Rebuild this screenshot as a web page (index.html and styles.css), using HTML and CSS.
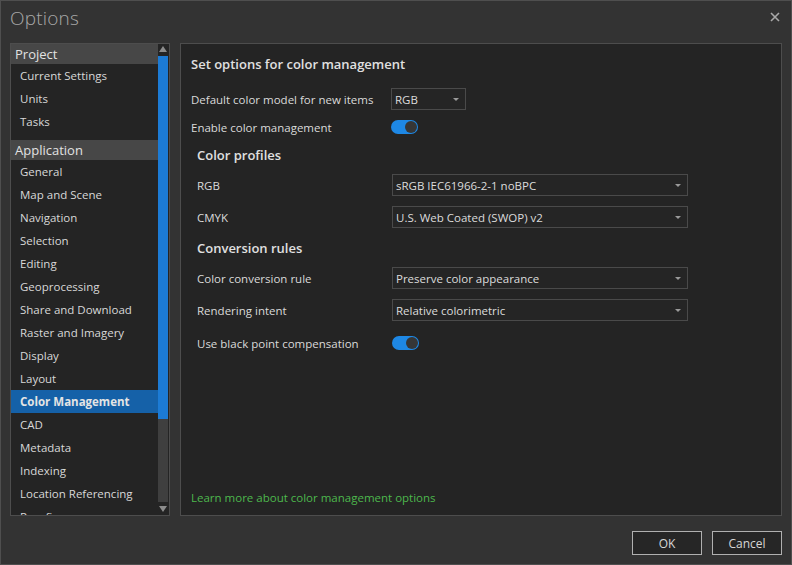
FILE: index.html
```html
<!DOCTYPE html>
<html>
<head>
<meta charset="utf-8">
<link rel="stylesheet" href="styles.css">
</head>
<body>
<div class="window">
  <div class="titlebar">
    <span class="title">Options</span>
    <span class="close">
      <svg width="10" height="10" viewBox="0 0 10 10"><path d="M1 1 L9 9 M9 1 L1 9" stroke="#a9a9a9" stroke-width="1.6"/></svg>
    </span>
  </div>
  <div class="body">
    <div class="sidebar">
      <div class="list">
        <div class="group">Project</div>
        <div class="item">Current Settings</div>
        <div class="item">Units</div>
        <div class="item">Tasks</div>
        <div class="group group-gap">Application</div>
        <div class="item">General</div>
        <div class="item">Map and Scene</div>
        <div class="item">Navigation</div>
        <div class="item">Selection</div>
        <div class="item">Editing</div>
        <div class="item">Geoprocessing</div>
        <div class="item">Share and Download</div>
        <div class="item">Raster and Imagery</div>
        <div class="item">Display</div>
        <div class="item">Layout</div>
        <div class="item selected">Color Management</div>
        <div class="item">CAD</div>
        <div class="item">Metadata</div>
        <div class="item">Indexing</div>
        <div class="item">Location Referencing</div>
        <div class="item">Proofing</div>
      </div>
      <div class="scrollbar">
        <div class="arrow up"></div>
        <div class="track">
          <div class="thumb"></div>
        </div>
        <div class="arrow down"></div>
      </div>
    </div>
    <div class="main">
      <div class="heading">Set options for color management</div>
      <div class="row row-first">
        <span class="label">Default color model for new items</span>
        <div class="select small"><span>RGB</span><i class="caret"></i></div>
      </div>
      <div class="row row-toggle">
        <span class="label">Enable color management</span>
        <div class="toggle"><i class="knob"></i></div>
      </div>
      <div class="subhead sub-first">Color profiles</div>
      <div class="row indent r-a">
        <span class="label">RGB</span>
        <div class="select wide"><span>sRGB IEC61966-2-1 noBPC</span><i class="caret"></i></div>
      </div>
      <div class="row indent r-b">
        <span class="label">CMYK</span>
        <div class="select wide"><span>U.S. Web Coated (SWOP) v2</span><i class="caret"></i></div>
      </div>
      <div class="subhead sub-second">Conversion rules</div>
      <div class="row indent r-a">
        <span class="label">Color conversion rule</span>
        <div class="select wide"><span>Preserve color appearance</span><i class="caret"></i></div>
      </div>
      <div class="row indent r-b">
        <span class="label">Rendering intent</span>
        <div class="select wide"><span>Relative colorimetric</span><i class="caret"></i></div>
      </div>
      <div class="row indent row-toggle2">
        <span class="label">Use black point compensation</span>
        <div class="toggle"><i class="knob"></i></div>
      </div>
      <div class="link">Learn more about color management options</div>
    </div>
  </div>
  <div class="footer">
    <button class="btn">OK</button>
    <button class="btn">Cancel</button>
  </div>
</div>
</body>
</html>
```
FILE: styles.css
```css
* { box-sizing: border-box; }
html, body { margin: 0; padding: 0; background: #333333; }
body { font-family: "Open Sans", "Noto Sans", sans-serif; font-size: 11.5px; color: #dadada; }

.window {
  width: 792px;
  height: 565px;
  border: 1px solid #4f4f4f;
  background: #333333;
  display: flex;
  flex-direction: column;
}

.titlebar {
  height: 42px;
  display: flex;
  align-items: center;
  justify-content: space-between;
  padding: 0 11px 0 9px;
}
.title {
  font-size: 19px;
  font-weight: 300;
  color: #a8a8a8;
  letter-spacing: 0.2px;
  margin-top: -8px;
}
.close { display: flex; margin-top: -10px; }

.body {
  display: flex;
  gap: 10px;
  padding: 0 9px;
  height: 473px;
}

.sidebar {
  width: 160px;
  border: 1px solid #4d4d4d;
  background: #242424;
  display: flex;
  overflow: hidden;
}
.list {
  flex: 1;
  overflow: hidden;
}
.group {
  height: 20px;
  line-height: 20px;
  background: #474747;
  color: #e2e2e2;
  font-size: 13px;
  padding-left: 4px;
}
.group-gap { margin-top: 7px; }
.item {
  height: 23px;
  line-height: 23px;
  padding-left: 9px;
  white-space: nowrap;
  color: #d8d8d8;
}
.item.selected {
  background: #1561a8;
  font-weight: 700;
  color: #e4e4e4;
}

.scrollbar {
  width: 10px;
  margin-right: 1px;
  display: flex;
  flex-direction: column;
  align-items: center;
  background: #242424;
}
.arrow {
  width: 0; height: 0;
  border-left: 4px solid transparent;
  border-right: 4px solid transparent;
}
.arrow.up { border-bottom: 6px solid #8c8c8c; margin: 2px 0 4px; }
.arrow.down { border-top: 6px solid #8c8c8c; margin: 4px 0 3px; }
.track {
  flex: 1;
  width: 10px;
  background: #3f3f3f;
}
.thumb {
  height: 363px;
  background: #1c7bd5;
}

.main {
  flex: 1;
  border: 1px solid #4d4d4d;
  background: #242424;
  display: flex;
  flex-direction: column;
  padding: 11px 0 9px 10px;
}
.heading {
  height: 18px;
  line-height: 18px;
  font-size: 13px;
  font-weight: 600;
  color: #e0e0e0;
}
.row {
  height: 22px;
  display: flex;
  align-items: center;
}
.row .label { width: 200px; flex: none; }
.row.indent { padding-left: 6px; }
.row.indent .label { width: 195px; }
.row-first { margin-top: 15px; }
.row-toggle { margin-top: 6px; }
.subhead {
  height: 18px;
  line-height: 18px;
  font-size: 13px;
  font-weight: 600;
  padding-left: 6px;
  color: #e0e0e0;
}
.sub-first { margin-top: 8px; }
.sub-second { margin-top: 11px; }
.r-a { margin-top: 10px; }
.r-b { margin-top: 10px; }
.row-toggle2 { margin-top: 11px; }

.select {
  height: 22px;
  border: 1px solid #4a4a4a;
  background: #252525;
  display: flex;
  align-items: center;
  justify-content: space-between;
  padding: 0 6px 0 3px;
  color: #dcdcdc;
}
.select.small { width: 75px; }
.select.wide { width: 296px; }
.caret {
  width: 0; height: 0;
  border-left: 3px solid transparent;
  border-right: 3px solid transparent;
  border-top: 3px solid #9a9a9a;
}

.toggle {
  width: 27px;
  height: 14px;
  border-radius: 7px;
  background: #1e88e5;
  display: flex;
  align-items: center;
  justify-content: flex-end;
  padding-right: 1px;
}
.knob {
  width: 12px;
  height: 12px;
  border-radius: 50%;
  background: #363636;
}

.link {
  margin-top: auto;
  height: 16px;
  line-height: 16px;
  color: #4db84d;
}

.footer {
  display: flex;
  justify-content: flex-end;
  gap: 10px;
  padding: 15px 9px 0;
}
.btn {
  width: 70px;
  height: 24px;
  border: 1px solid #b0b0b0;
  background: #262626;
  color: #d6d6d6;
  font-family: "Open Sans", "Noto Sans", sans-serif;
  font-size: 12px;
  padding: 0;
}
```
